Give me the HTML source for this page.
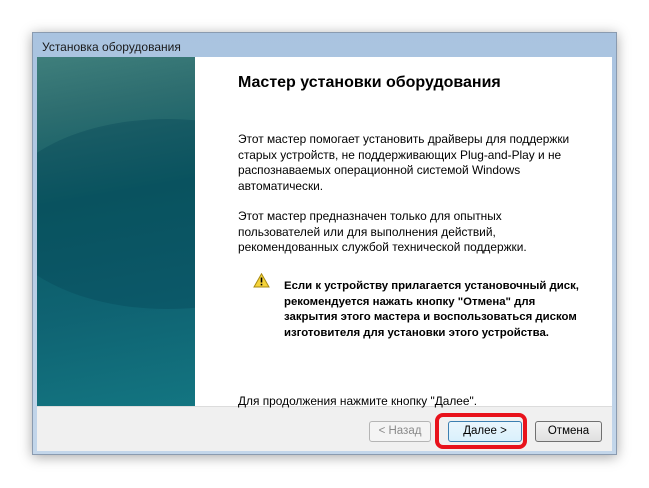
<!DOCTYPE html>
<html><head><meta charset="utf-8"><style>
body{margin:0;width:649px;height:488px;background:#fff;position:relative;overflow:hidden;font-family:"Liberation Sans",sans-serif;}
.win{position:absolute;left:32px;top:32px;width:585px;height:423px;background:linear-gradient(#a9c3e0,#c3d6ea);box-shadow:0 2px 12px rgba(0,0,0,.35);border:1px solid #8a9bb0;box-sizing:border-box;}
.title{position:absolute;left:9px;top:7px;font-size:12px;color:#1a1a1a;}
.left{position:absolute;left:37px;top:57px;width:158px;height:349px;background:linear-gradient(170deg,#3f7f7c 0%,#2e6e70 15%,#0b5a64 40%,#0f6372 70%,#137581 100%);overflow:hidden;}
.left .c{position:absolute;left:-40px;top:62px;width:340px;height:190px;border-radius:50%;background:rgba(5,70,85,.35);}
.right{position:absolute;left:195px;top:57px;width:417px;height:349px;background:#fff;}
.bar{position:absolute;left:37px;top:406px;width:575px;height:44px;background:#f0f0f0;border-top:1px solid #dcdcdc;}
h1{position:absolute;left:238px;top:74px;margin:0;font-size:16px;font-weight:bold;color:#000;white-space:nowrap;}
.p{position:absolute;left:238px;font-size:11.9px;line-height:15.7px;color:#000;white-space:nowrap;}
.w{position:absolute;left:284px;top:279px;font-size:11.4px;line-height:15.6px;font-weight:bold;color:#000;white-space:nowrap;}
.btn{position:absolute;top:421px;height:21px;box-sizing:border-box;border:1px solid #707070;border-radius:3px;background:linear-gradient(#f2f2f2,#e0e0e0);font-size:11.5px;text-align:center;line-height:19px;color:#000;}
.red{position:absolute;left:435px;top:413px;width:92px;height:36px;box-sizing:border-box;border:4px solid #e8121b;border-radius:8px;}
</style></head><body>
<div class="win"><div class="title">Установка оборудования</div></div>
<div class="left"><div class="c"></div></div>
<div class="right"></div>
<div class="bar"></div>
<h1>Мастер установки оборудования</h1>
<div class="p" style="top:132px">Этот мастер помогает установить драйверы для поддержки<br>старых устройств, не поддерживающих Plug-and-Play и не<br>распознаваемых операционной системой Windows<br>автоматически.</div>
<div class="p" style="top:209px">Этот мастер предназначен только для опытных<br>пользователей или для выполнения действий,<br>рекомендованных службой технической поддержки.</div>
<svg style="position:absolute;left:253px;top:273px" width="17" height="15" viewBox="0 0 17 15"><path d="M8.5 0.8L16 14H1Z" fill="#f5d33a" stroke="#a88a10" stroke-width="1"/><rect x="7.7" y="4.5" width="1.6" height="5" fill="#000"/><rect x="7.7" y="10.8" width="1.6" height="1.6" fill="#000"/></svg>
<div class="w">Если к устройству прилагается установочный диск,<br>рекомендуется нажать кнопку "Отмена" для<br>закрытия этого мастера и воспользоваться диском<br>изготовителя для установки этого устройства.</div>
<div class="p" style="top:394px">Для продолжения нажмите кнопку "Далее".</div>
<div class="btn" style="left:369px;width:62px;color:#8a8a8a;border-color:#b5b5b5;background:#f4f4f4">&lt; Назад</div>
<div class="btn" style="left:448px;width:74px;border-color:#3c7fb1;background:linear-gradient(#eaf6fd,#d9f0fc)">Далее &gt;</div>
<div class="btn" style="left:535px;width:67px">Отмена</div>
<div class="red"></div>
</body></html>
